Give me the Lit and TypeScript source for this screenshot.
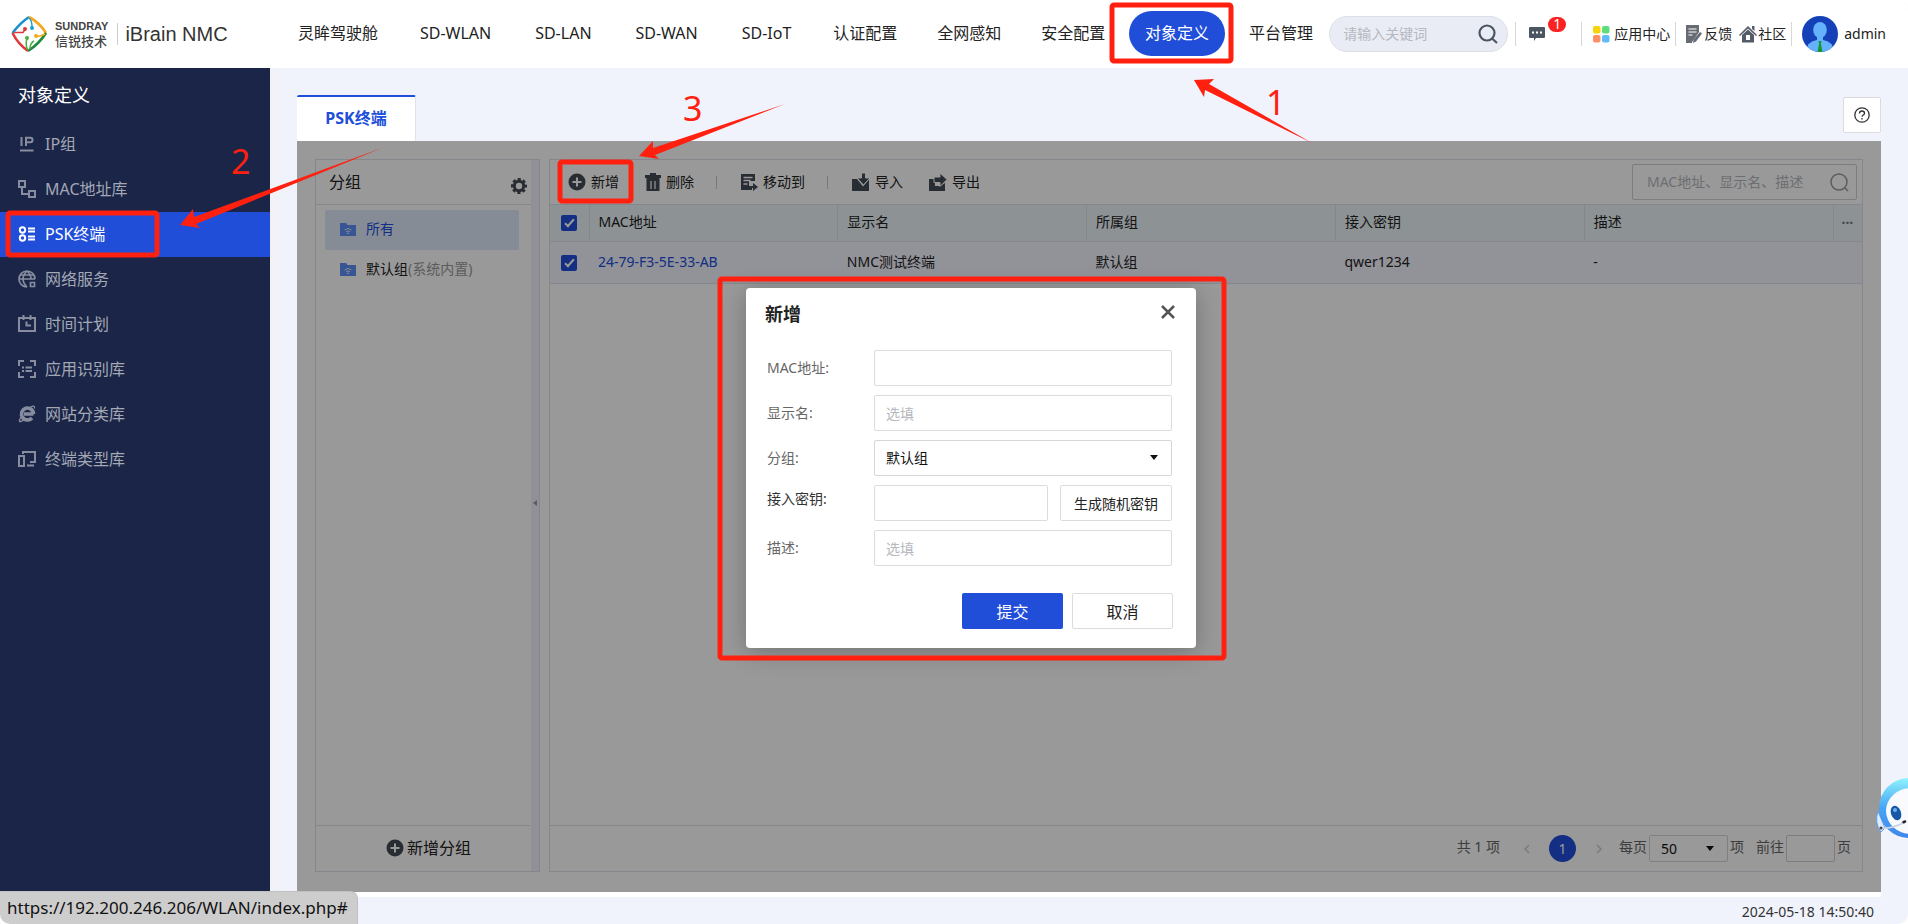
import { LitElement, html, svg, css } from "lit";
import { customElement, state } from "lit/decorators.js";
import { classMap } from "lit/directives/class-map.js";

const NAV = ["灵眸驾驶舱", "SD-WLAN", "SD-LAN", "SD-WAN", "SD-IoT", "认证配置", "全网感知", "安全配置", "对象定义", "平台管理"];

const plusCircle = html`<svg class="ico" viewBox="0 0 18 18" width="18" height="18" aria-hidden="true">
  <circle cx="9" cy="9" r="8.5" fill="#444a55"/><path d="M9 4.5v9M4.5 9h9" stroke="#fff" stroke-width="2"/></svg>`;

const folder = html`<svg viewBox="0 0 16 14" width="16" height="14" aria-hidden="true">
  <path d="M0 1h6l1.500 2H16v11H0z" fill="#5c8ef5"/>
  <path d="M4.500 8q3.500-3 7 0M6 9.800q2-1.600 4 0" stroke="#fff" stroke-width=".8" fill="none"/><circle cx="8" cy="11.300" r=".8" fill="#fff"/></svg>`;

const MENU = [
  { label: "IP组", icon: svg`<path d="M3.500 2v9M8 11V2.800h4.500q2 0 2 2.200t-2 2.200H8M2 15.500h13.500" />` },
  { label: "MAC地址库", icon: svg`<path d="M1 1h6v6H1zM11 11h6v6h-6zM4 7v7h7" />` },
  { label: "PSK终端", icon: svg`<circle cx="4.500" cy="5" r="2.700"/><circle cx="4.500" cy="13" r="2.700"/><path d="M10 3.500h7M10 6.500h7M10 11.500h7M10 14.500h7" />` },
  { label: "网络服务", icon: svg`<path d="M9 17A8 8 0 1 1 17 9M1 9h16M2.500 5h13M9 1q-4 4-4 8t4 8M9 1q4 4 4 8M12.500 12.500h4v4h-4z" stroke-width="1.700"/>` },
  { label: "时间计划", icon: svg`<path d="M1 3h16v13H1zM5.500 0v5M12.500 0v5M8.500 6.500v4h4.500" />` },
  { label: "应用识别库", icon: svg`<path d="M1 6V1h5M12 1h5v5M17 12v5h-5M6 17H1v-5M4 7.500h2M7.500 7.500h6.500M4 11h2M7.500 11h6.500" />` },
  { label: "网站分类库", icon: svg`<path d="M15.500 9H6M15.500 9A6 6 0 1 0 14 13" stroke-width="3.600"/><path d="M3 12Q0 17 2.500 16.500T8 13.500M11 3Q17-1 16.500 3.500" stroke-width="1.300"/>` },
  { label: "终端类型库", icon: svg`<path d="M5 4V2h12v10h-5M1 6h5v10H1zM9 15.500h7" />` },
];

@customElement("app-root")
export class AppRoot extends LitElement {
  @state() private active = "PSK终端";

  static styles = css`
    :host {
      display: grid;
      grid-template-rows: 68px 1fr 27px;
      position: relative;
      height: 100vh;
      min-height: 720px;
      overflow: hidden;
      background: #f0f3fc;
      border-radius: 10px;
      font: 14px/20px "Noto Sans", "Noto Sans CJK SC", sans-serif;
      color: #222;
    }
    *, *::before, *::after { box-sizing: border-box; }
    a { color: inherit; text-decoration: none; }
    svg { display: block; flex: none; }
    button, input, select { font: inherit; color: inherit; margin: 0; border-radius: 2px; }
    button { padding: 0; border: 0; background: none; }

    .top { display: flex; align-items: center; background: #fff; padding-right: 22px; }
    .brand { display: flex; align-items: center; width: 282px; padding-left: 10px; flex: none; }
    .maker { display: flex; flex-direction: column; padding: 0 9px 0 7px; font: 700 11px/13px "Liberation Sans", sans-serif; color: #444; }
    .maker-cn { font: 500 13px/15px "Noto Sans CJK SC", sans-serif; }
    .product { border-left: 1px solid #ccc; padding-left: 7px; font: 20px/22px "Liberation Sans", sans-serif; color: #333; }
    .nav { display: flex; justify-content: space-between; flex: 1; font-size: 16px; line-height: 45px; padding-bottom: 2px; }
    .nav a { padding: 0 16px; white-space: nowrap; }
    .nav .latin { padding: 0 18px; }
    .nav .on { background: #204ed9; color: #fff; border-radius: 23px; }
    .find { display: flex; align-items: center; width: 179px; height: 36px; border: 1px solid #dcdfe5; border-radius: 18px; background: #e9ecf5; padding: 0 9px 0 13px; flex: none; }
    .find input { flex: 1; min-width: 0; border: 0; background: none; padding: 0; outline: 0; }
    ::placeholder { color: #b5b8be; opacity: 1; }
    .tools { display: flex; align-items: center; flex: none; padding-left: 7px; }
    .bar { width: 1px; height: 24px; background: #d8d8d8; }
    .chat { position: relative; width: 65px; padding-left: 13px; }
    .badge { position: absolute; left: 32px; top: -10px; width: 18px; height: 15px; border-radius: 8px; background: #fa2323; color: #fff; line-height: 14px; text-align: center; }
    .tool { display: flex; align-items: center; gap: 4px; }
    .apps { padding: 0 5px 0 11px; }
    .feed { padding: 0 7px 0 10px; gap: 2px; }
    .home { padding-right: 5px; gap: 1px; }
    .user { display: flex; align-items: center; gap: 6px; padding-left: 10px; }

    .body { display: flex; min-height: 0; }
    .side { width: 270px; flex: none; background: #1a2547; margin-bottom: 5px; color: #a3a8b5; }
    .side h1 { margin: 0; padding-left: 18px; font-size: 18px; font-weight: 400; line-height: 54px; color: #fff; }
    .side a { display: flex; align-items: center; gap: 9px; height: 45px; padding: 0 0 2px 18px; font-size: 16px; }
    .side .on { background: #204ed9; color: #fff; }
    .side svg { fill: none; stroke: currentColor; stroke-width: 2; opacity: .8; }
    .side .on svg { opacity: 1; }

    .main { flex: 1; min-width: 0; display: flex; flex-direction: column; padding: 27px 27px 0; background: linear-gradient(90deg, #f2f2f5, #f0f3fc 16px); }
    .tabs { display: flex; justify-content: space-between; align-items: flex-start; height: 46px; flex: none; }
    .tab { width: 119px; height: 46px; border-top: 2px solid #204ed9; border-right: 1px solid #e0e3ec; background: #fff; color: #204ed9; font-size: 16px; font-weight: 700; padding-bottom: 2px; }
    .help { display: grid; place-items: center; width: 38px; height: 36px; margin-top: 2px; border: 1px solid #dcdcdc; background: #fff; }
    .stage { position: relative; flex: 1; min-height: 0; display: flex; gap: 9px; padding: 18px 18px 20px; background: #fff; margin-bottom: 5px; }
    .white { flex: none; height: 5px; background: #fff; margin-top: -5px; }
    .groups { display: flex; width: 225px; flex: none; border: 1px solid #dfe1ec; }
    .gcol { flex: 1; display: flex; flex-direction: column; }
    .strip { width: 8px; padding: 340px 0 0 2px; background: #f0f1fb; }
    .ghead { display: flex; align-items: center; justify-content: space-between; height: 45px; padding: 0 4px 0 13px; border-bottom: 1px solid #dfe1ec; font-size: 16px; flex: none; }
    .ghead svg { margin-top: 7px; }
    .glist { flex: 1; padding: 5px 12px 0 9px; }
    .glist a { display: flex; align-items: center; gap: 10px; height: 40px; padding: 0 0 2px 15px; border-radius: 2px; }
    .glist .sel { background: #dfe9fb; color: #204ed9; }
    .muted { color: #999; margin-left: -10px; }
    .gadd { display: flex; align-items: center; justify-content: center; gap: 3px; height: 46px; border-top: 1px solid #dfe1ec; font-size: 16px; flex: none; padding: 0 0 2px 10px; }

    .list { flex: 1; min-width: 0; display: flex; flex-direction: column; border: 1px solid #dfe1ec; }
    .acts { display: flex; align-items: center; height: 44px; padding: 0 5px 0 18px; flex: none; }
    .acts button { display: flex; align-items: center; gap: 5px; margin-right: 26px; }
    .acts .div { width: 1px; height: 13px; background: #c8c8cc; margin: 0 24px 0 -4px; }
    .query { display: flex; align-items: center; margin-left: auto; width: 225px; height: 36px; border: 1px solid #d0d0d4; border-radius: 2px; padding: 0 7px 0 14px; }
    .query input { flex: 1; min-width: 0; border: 0; background: none; padding: 0; }
    table { width: 100%; table-layout: fixed; border-collapse: collapse; }
    .cbox { width: 39px; } .more { width: 29px; }
    th, td { padding: 0 9px 2px; text-align: left; font-weight: 400; border-bottom: 1px solid #dfe1ec; border-top: 1px solid #dfe1ec; }
    th { height: 37px; background: #ebf3f7; border-right: 1px solid #dde3ec; }
    th:last-child { border-right: 0; padding: 0 8px; color: #777; font-weight: 700; }
    td { height: 42px; background: #f4f5ff; }
    .pick { padding: 0 11px; }
    td a { color: #204ed9; }
    input[type="checkbox"] { display: grid; place-items: center; appearance: none; width: 16px; height: 16px; background: #204ed9; }
    input[type="checkbox"]::after { content: ""; width: 5px; height: 10px; border: solid #fff; border-width: 0 2px 2px 0; transform: translateY(-1px) rotate(42deg); }
    .pager { display: flex; align-items: center; justify-content: flex-end; height: 46px; margin-top: auto; padding: 0 11px 0 0; border-top: 1px solid #dfe1ec; color: #666; }
    .pager > span, .pager > label { padding-bottom: 3px; }
    .pager button { display: grid; place-items: center; width: 27px; height: 27px; border-radius: 50%; }
    .pager .cur { background: #204ed9; color: #fff; margin: 0 9px; }
    .pager .step { margin-right: 7px; } .total { margin-right: 13px; }
    .pager .drop { width: 79px; height: 27px; margin: 0 2px; padding: 0; }
    .goto { margin-left: 12px; }
    .jump { width: 49px; height: 27px; margin: 0 2px; border: 1px solid #d0d0d4; background: none; }
    .drop { position: relative; }
    .drop select { appearance: none; width: 100%; height: 100%; border: 1px solid #d6d6da; background: none; padding: 0 11px; color: #111; }
    .drop::after { content: ""; position: absolute; right: 14px; top: 50%; margin-top: -3px; border: 4px solid transparent; border-top: 5px solid #111; border-bottom: 0; pointer-events: none; }

    .shade { position: absolute; inset: 0; background: rgba(0, 0, 0, .4); }
    .dialog { position: absolute; left: 449px; top: 147px; width: 450px; height: 360px; background: #fff; border-radius: 4px; box-shadow: 0 4px 24px rgba(0, 0, 0, .25); padding: 10px 24px 18px 21px; }
    .dhead { display: flex; justify-content: space-between; align-items: center; height: 32px; }
    .dhead h2 { margin: 0 -2px; font-size: 18px; line-height: 26px; }
    .dhead button { margin: -4px -4px 0 0; }
    .form { display: grid; grid-template-columns: 107px 1fr; row-gap: 9px; padding-top: 20px; align-items: center; }
    .form label { color: #666; }
    .form .strong { color: #333; padding-bottom: 8px; }
    .form input, .form .drop { width: 100%; min-width: 0; height: 36px; }
    .form input { border: 1px solid #dcdcdc; padding: 0 11px; }
    .key { display: grid; grid-template-columns: 174px 112px; justify-content: space-between; }
    .line { border: 1px solid #dcdcdc; background: #fff; color: #222; height: 36px; white-space: nowrap; padding-top: 2px; }
    .foot { display: flex; justify-content: flex-end; gap: 9px; margin: 27px -1px 0 0; font-size: 16px; }
    .foot button { width: 101px; height: 36px; padding-top: 2px; }
    .ok { background: #204ed9; color: #fff; }

    .bottom { display: flex; justify-content: flex-end; align-items: center; padding: 3px 34px 0 0; color: #333; }
    .status { position: absolute; left: 0; bottom: 0; height: 33px; padding: 0 9px 0 7px; border-radius: 0 8px 0 0; background: #cdcdcd; border-top: 1px solid #c0c0c0; border-right: 1px solid #c0c0c0; font-size: 17px; line-height: 31px; color: #111; }
    .bot { position: absolute; right: 0; bottom: 83px; }
    .marks { position: absolute; inset: 0; width: 100%; height: 100%; pointer-events: none; overflow: visible; }
    .frame { fill: none; stroke: #ff2010; stroke-width: 5; }
    .hot { fill: #ff2010; }
    .num { fill: #ff2010; font-size: 34px; }
  `;

  private header() {
    return html`<header class="top">
      <div class="brand">
        <svg viewBox="0 0 38 38" width="38" height="38" aria-hidden="true" fill="none" stroke-width="2.600">
          <path d="M2.500 18Q10 8 19 2" stroke="#1d8fd0"/><path d="M19 2Q30 8 36 18" stroke="#f5a81c"/>
          <path d="M36 18Q29 29 18 36" stroke="#1d8a3c"/><path d="M18 36Q8 29 2.500 18" stroke="#e0393a"/>
          <path d="M4 17.500h9l2-3" stroke="#e0393a" stroke-width="1.500"/><path d="M19 3q3 2 3 9" stroke="#1d9fd8" stroke-width="1.500"/>
          <path d="M35 19q-5 3-9 2" stroke="#f5a81c" stroke-width="1.500"/><path d="M18 35q-3-4-1-12M20 34q0-6 4-8" stroke="#4bb043" stroke-width="1.500"/>
          <circle cx="15" cy="14" r="2" fill="#e0393a" stroke="none"/><circle cx="22" cy="13" r="2" fill="#1d9fd8" stroke="none"/>
          <circle cx="26" cy="21" r="2" fill="#f5a81c" stroke="none"/><circle cx="17" cy="23" r="2" fill="#4bb043" stroke="none"/>
        </svg>
        <div class="maker"><span>SUNDRAY</span><span class="maker-cn">信锐技术</span></div>
        <span class="product">iBrain NMC</span>
      </div>
      <nav class="nav">${NAV.map((n) => html`<a href="#" class=${classMap({ on: n === "对象定义", latin: n.startsWith("SD") })}>${n}</a>`)}</nav>
      <label class="find">
        <input type="search" placeholder="请输入关键词" aria-label="请输入关键词">
        <svg viewBox="0 0 20 20" width="20" height="20" fill="none" stroke="#4c5562" stroke-width="2.200"><circle cx="9" cy="9" r="7.500"/><path d="M14 14.500l5 4.500"/></svg>
      </label>
      <div class="tools">
        <span class="bar"></span>
        <a class="chat" href="#" aria-label="消息">
          <svg viewBox="0 0 16 14" width="16" height="14"><path d="M1 0h14q1 0 1 1v9q0 1-1 1H7l-2 3v-3H1q-1 0-1-1V1q0-1 1-1z" fill="#4c5562"/><path d="M3 5.500h2M7 5.500h2M11 5.500h2" stroke="#fff" stroke-width="2"/></svg>
          <span class="badge">1</span>
        </a>
        <span class="bar"></span>
        <a class="tool apps" href="#"><svg viewBox="0 0 17 17" width="17" height="17"><rect width="7.500" height="7.500" rx="2" fill="#f8d30a"/><rect x="9" width="7.500" height="7.500" rx="2" fill="#5fdc7c"/><rect y="9" width="7.500" height="7.500" rx="2" fill="#ff9066"/><rect x="9" y="9" width="7.500" height="7.500" rx="2" fill="#5fbcf8"/></svg>应用中心</a>
        <span class="bar"></span>
        <a class="tool feed" href="#"><svg viewBox="0 0 16 18" width="16" height="18"><path d="M0 0h13v7l-7 10v1H0z" fill="#666b74"/><path d="M2.500 4h8M2.500 7h8M2.500 10h4" stroke="#fff" stroke-width="1.200"/><path d="M14 7l2 1.500-6 8-3 1.500.5-3.500z" fill="#666b74"/></svg>反馈</a>
        <a class="tool home" href="#"><svg viewBox="0 0 18 18" width="18" height="18"><path d="M0 10L9 1l9 9-1 1-8-7.500L1 11z" fill="#555c67"/><path d="M3 10l6-5.500L15 10v7.500H3z" fill="#555c67"/><path d="M13 1h2.500v5L13 4z" fill="#555c67"/><rect x="7" y="10" width="4" height="5" fill="#fff"/></svg>社区</a>
        <span class="bar"></span>
        <a class="user" href="#">
          <svg viewBox="0 0 36 36" width="36" height="36"><clipPath id="av"><circle cx="18" cy="18" r="18"/></clipPath><g clip-path="url(#av)"><rect width="36" height="36" fill="#1440b8"/><ellipse cx="18" cy="14" rx="6.800" ry="8" fill="#66b1fb"/><path d="M15 20h6v4q10 1 11 12H4q1-11 11-12z" fill="#66b1fb"/><path d="M16.500 25h3l-.6 2.500 1.600 8.500h-5l1.600-8.500z" fill="#109c2c"/></g></svg>
          admin</a>
      </div>
    </header>`;
  }

  private groups() {
    return html`<section class="groups">
      <div class="gcol">
        <div class="ghead">分组
          <svg viewBox="0 0 16 16" width="16" height="16" aria-hidden="true" fill="none" stroke="#444a55"><circle cx="8" cy="8" r="4.700" stroke-width="3"/><circle cx="8" cy="8" r="6.800" stroke-width="2.400" stroke-dasharray="3.200 2.140" stroke-dashoffset="1.600"/></svg>
        </div>
        <div class="glist">
          <a class="sel" href="#">${folder}所有</a>
          <a href="#">${folder}默认组<span class="muted">(系统内置)</span></a>
        </div>
        <button class="gadd">${plusCircle}新增分组</button>
      </div>
      <div class="strip"><svg viewBox="0 0 4 6" width="4" height="6"><path d="M4 0v6L0 3z" fill="#999"/></svg></div>
    </section>`;
  }

  private list() {
    return html`<section class="list">
      <div class="acts">
        <button>${plusCircle}新增</button>
        <button><svg viewBox="0 0 16 18" width="16" height="18" fill="#444a55"><path d="M0 2h5V0h6v2h5v3H0zM1.500 5h13v13h-13z"/><path d="M6 8v8M10 8v8" stroke="#fff" stroke-width="1.200"/></svg>删除</button>
        <span class="div"></span>
        <button><svg viewBox="0 0 17 17" width="17" height="17"><path d="M0 0h14v7H8v7h3v2H0z" fill="#444a55"/><path d="M2.500 3.500h9M2.500 6.500h7M2.500 10h4" stroke="#fff" stroke-width="1.300" fill="none"/><path d="M8 8v4h4V9l5 4-5 4v-3H7" fill="#444a55"/></svg>移动到</button>
        <span class="div"></span>
        <button><svg viewBox="0 0 18 18" width="18" height="18" fill="#444a55"><path d="M0 6h5l6 7.500 6-7V18H0z"/><path d="M9.500 0h4v5H18l-6.500 7L5 5h4.500z" stroke="#fff" stroke-width="1"/></svg>导入</button>
        <button><svg viewBox="0 0 18 18" width="18" height="18" fill="#444a55"><path d="M0 6h6v7h5l5-3v8H0z"/><path d="M5 4h6V0l7 6.500-7 7V9.500H5z" stroke="#fff" stroke-width="1"/></svg>导出</button>
        <label class="query"><input type="search" placeholder="MAC地址、显示名、描述" aria-label="MAC地址、显示名、描述">
          <svg viewBox="0 0 19 19" width="19" height="19" fill="none" stroke="#999" stroke-width="1.500"><circle cx="9" cy="9" r="8"/><path d="M15 15l3 3"/></svg></label>
      </div>
      <table>
        <thead><tr><th class="pick cbox"><input type="checkbox" checked aria-label="全选"></th>
          <th>MAC地址</th><th>显示名</th><th>所属组</th><th>接入密钥</th><th>描述</th><th class="more">···</th></tr></thead>
        <tbody><tr><td class="pick"><input type="checkbox" checked aria-label="24-79-F3-5E-33-AB"></td>
          <td><a href="#">24-79-F3-5E-33-AB</a></td><td>NMC测试终端</td><td>默认组</td><td>qwer1234</td><td>-</td><td></td></tr></tbody>
      </table>
      <div class="pager">
        <span class="total">共 1 项</span>
        <button aria-label="上一页"><svg viewBox="0 0 6 10" width="6" height="10" fill="none" stroke="#ccc" stroke-width="1.500"><path d="M5 1L1 5l4 4"/></svg></button>
        <button class="cur">1</button>
        <button class="step" aria-label="下一页"><svg viewBox="0 0 6 10" width="6" height="10" fill="none" stroke="#ccc" stroke-width="1.500"><path d="M1 1l4 4-4 4"/></svg></button>
        <label for="size">每页</label><span class="drop"><select id="size"><option>50</option></select></span><span>项</span>
        <label class="goto" for="jump">前往</label><input class="jump" id="jump"><span>页</span>
      </div>
    </section>`;
  }

  private dialog() {
    return html`<div class="dialog" role="dialog" aria-labelledby="dt">
      <div class="dhead"><h2 id="dt">新增</h2>
        <button aria-label="关闭"><svg viewBox="0 0 16 16" width="16" height="16"><path d="M2 2l12 12M14 2L2 14" stroke="#555" stroke-width="2.500"/></svg></button></div>
      <div class="form">
        <label for="mac">MAC地址:</label><input id="mac">
        <label for="nm">显示名:</label><input id="nm" placeholder="选填">
        <label for="grp">分组:</label><span class="drop"><select id="grp"><option>默认组</option></select></span>
        <label class="strong" for="key">接入密钥:</label><div class="key"><input id="key"><button class="line">生成随机密钥</button></div>
        <label for="ds">描述:</label><input id="ds" placeholder="选填">
      </div>
      <div class="foot"><button class="ok">提交</button><button class="line">取消</button></div>
    </div>`;
  }

  render() {
    return html`${this.header()}
      <div class="body">
        <nav class="side"><h1>对象定义</h1>
          ${MENU.map((m) => html`<a href="#" class=${classMap({ on: m.label === this.active })} @click=${() => (this.active = m.label)}>
            <svg viewBox="0 0 18 18" width="18" height="18" aria-hidden="true">${m.icon}</svg>${m.label}</a>`)}
        </nav>
        <main class="main">
          <div class="tabs"><button class="tab">PSK终端</button>
            <button class="help" aria-label="帮助"><svg viewBox="0 0 16 16" width="16" height="16" fill="none" stroke="#333" stroke-width="1.300"><circle cx="8" cy="8" r="7.200"/><path d="M5.500 6.500q0-2.500 2.500-2.500t2.500 2.200q0 1.300-1.500 2-1 .6-1 1.500M8 11v1.500"/></svg></button></div>
          <div class="stage">${this.groups()}${this.list()}<div class="shade"></div>${this.dialog()}</div>
          <div class="white"></div>
        </main>
      </div>
      <footer class="bottom"><time>2024-05-18 14:50:40</time></footer>
      <div class="status">https://192.200.246.206/WLAN/index.php#</div>
      <svg class="bot" viewBox="0 0 33 64" width="33" height="64" aria-hidden="true">
        <defs><linearGradient id="bg" x1="0" y1="0" x2="0" y2="1"><stop offset="0" stop-color="#8ff3fd"/><stop offset=".5" stop-color="#46a4f5"/><stop offset="1" stop-color="#3f86ea"/></linearGradient></defs>
        <path d="M3 34q-4 12 3 21l4-4z" fill="#dcecfb" stroke="#5c9be8"/>
        <circle cx="34" cy="31" r="30" fill="url(#bg)"/><ellipse cx="36" cy="34" rx="25" ry="23" fill="#f8fafd"/>
        <ellipse cx="21" cy="36" rx="5" ry="7.500" transform="rotate(-20 21 36)" fill="#1857a4"/><circle cx="20" cy="33" r="2" fill="#63b1f5"/>
        <ellipse cx="29" cy="45" rx="2.500" ry="1.500" transform="rotate(-25 29 45)" fill="#222"/><path d="M5 51q12 1 23-5" stroke="#c9d3e2" stroke-width="1.500" fill="none"/><circle cx="6" cy="51" r="1.500" fill="#445"/>
      </svg>
      <svg class="marks" aria-hidden="true">
        <rect class="frame" x="1112" y="5" width="119" height="56" rx="2"/>
        <rect class="frame" x="8" y="213" width="149" height="42" rx="2"/>
        <rect class="frame" x="560" y="162" width="71" height="39" rx="2"/>
        <rect class="frame" x="720" y="279" width="504" height="379" rx="2"/>
        <path class="hot" d="M1194 80L1214 79L1209 84L1312 143L1205 90L1204 97Z"/>
        <path class="hot" d="M180 225L193 209L194 217L382 148L196 224L200 228Z"/>
        <path class="hot" d="M639 156L653 141L653 148L785 104L655 155L659 159Z"/>
        <text class="num" x="1266" y="115">1</text><text class="num" x="231" y="174">2</text><text class="num" x="683" y="121">3</text>
      </svg>`;
  }
}
